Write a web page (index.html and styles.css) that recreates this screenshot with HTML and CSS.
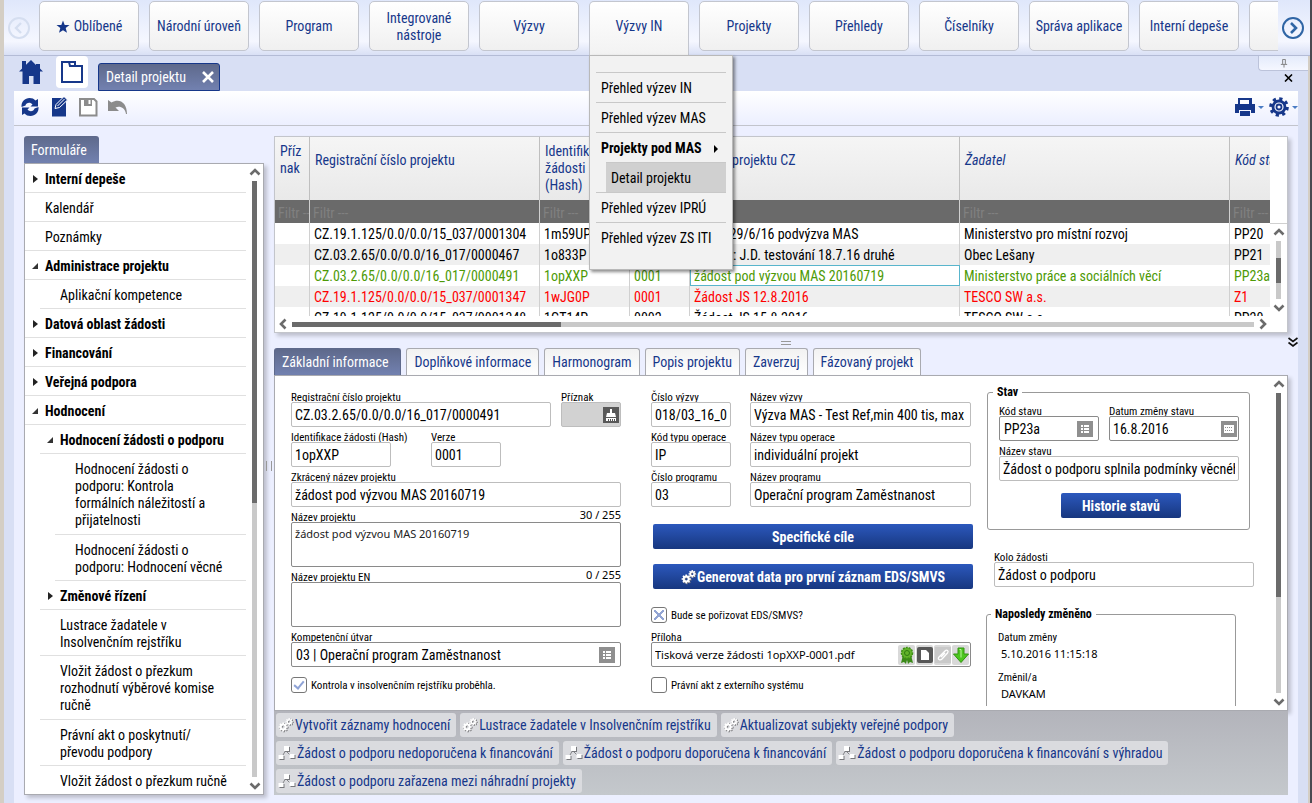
FILE: index.html
```html
<!DOCTYPE html>
<html lang="cs">
<head>
<meta charset="utf-8">
<title>Detail projektu</title>
<link rel="stylesheet" href="styles.css">
</head>
<body>
<svg class="defs" aria-hidden="true">
  <defs>
    <g id="gear-shape">
      <circle cx="0" cy="0" r="3" fill="none" stroke-width="2.4"/>
      <path d="M0-5.6V-3.4M0 3.4V5.6M-5.6 0H-3.4M3.4 0H5.6M-4-4L-2.6-2.6M2.6 2.6L4 4M4-4L2.6-2.6M-2.6 2.6L-4 4" fill="none" stroke-width="2"/>
    </g>
    <symbol id="gears" viewBox="0 0 16 16">
      <g stroke="#77777b" transform="translate(6 10.6) scale(.82)"><use href="#gear-shape"/></g>
      <g stroke="#77777b" transform="translate(12 5.4) scale(.66)"><use href="#gear-shape"/></g>
      <g stroke="#fff" transform="translate(5.2 10) scale(.82)"><use href="#gear-shape"/></g>
      <g stroke="#fff" transform="translate(11.2 4.8) scale(.66)"><use href="#gear-shape"/></g>
    </symbol>
    <symbol id="flow" viewBox="0 0 18 16">
      <path d="M7.500 5.500L4.500 11M8.500 6.500L12.500 10.500" stroke="#85868a" fill="none"/>
      <path d="M7 2h5v5H7zM1.500 11h5v4h-5zM12.500 10h5v4h-5z" fill="#77787c"/>
      <path d="M6 1h5v5H6zM.5 10h5v4h-5zM11.500 9h5v4h-5z" fill="#fff"/>
    </symbol>
    <symbol id="list" viewBox="0 0 16 16">
      <path d="M0 0h16v16H0z" fill="#8f8f8f"/>
      <path d="M4 4h2v2H4zM7 4h5v2H7zM4 7h2v2H4zM7 7h5v2H7zM4 10h2v2H4zM7 10h5v2H7z" fill="#fff"/>
    </symbol>
    <symbol id="chev" viewBox="0 0 12 8"><path d="M1.500 6.500L6 2L10.500 6.500" fill="none" stroke="#6b6b6b" stroke-width="2.600"/></symbol>
  </defs>
</svg>
<div class="app">
  <header class="top">
    <button class="scroll-nav" aria-label="Předchozí"><svg viewBox="0 0 24 24" width="24" height="24" fill="none" stroke="#d5def0" stroke-width="2"><circle cx="12" cy="12" r="10"/><path d="M14 7l-5 5 5 5" stroke-width="2.400"/></svg></button>
    <nav class="menu">
      <a href="#" class="mi"><svg viewBox="0 0 14 14" width="14" height="14"><path d="M7 .5l1.700 4.400 4.800.2-3.800 3 1.300 4.700L7 10.200 3 12.800l1.300-4.700-3.800-3 4.800-.2z" fill="#16378a"/></svg>Oblíbené</a>
      <a href="#" class="mi">Národní úroveň</a>
      <a href="#" class="mi">Program</a>
      <a href="#" class="mi">Integrované nástroje</a>
      <a href="#" class="mi">Výzvy</a>
      <div class="drop">
        <a href="#" class="mi open">Výzvy IN</a>
        <div class="submenu">
          <a href="#">Přehled výzev IN</a>
          <a href="#">Přehled výzev MAS</a>
          <a href="#" class="strong">Projekty pod MAS<i class="arrow"></i></a>
          <a href="#" class="nested">Detail projektu</a>
          <a href="#">Přehled výzev IPRÚ</a>
          <a href="#">Přehled výzev ZS ITI</a>
        </div>
      </div>
      <a href="#" class="mi">Projekty</a>
      <a href="#" class="mi">Přehledy</a>
      <a href="#" class="mi">Číselníky</a>
      <a href="#" class="mi">Správa aplikace</a>
      <a href="#" class="mi">Interní depeše</a>
      <a href="#" class="mi" aria-label="Další"></a>
    </nav>
    <button class="scroll-nav" aria-label="Další"><svg viewBox="0 0 24 24" width="24" height="24" fill="none" stroke="#2f65a5" stroke-width="2"><circle cx="12" cy="12" r="10"/><path d="M10 7l5 5-5 5" stroke-width="2.600"/></svg></button>
  </header>
  <div class="tabbar">
    <button class="plain home" aria-label="Domů"><svg viewBox="0 0 26 26" width="26" height="26"><path d="M13 1L1 12.500h3.500V25h6.500v-8h4.500v8H22V12.500h3l-3-3V5h-4v1z" fill="#16378a"/><path d="M4 2h4v5l-4 4z" fill="#16378a"/></svg></button>
    <button class="plain folder" aria-label="Složky"><svg viewBox="0 0 24 24" width="24" height="24" fill="none" stroke="#16378a" stroke-width="2"><path d="M2 2h7l1 4h12v16H2zM9 2h6v4"/></svg></button>
    <div class="doctab"><span>Detail projektu</span><button class="plain" aria-label="Zavřít záložku"><svg viewBox="0 0 12 12" width="12" height="12"><path d="M1 1l10 10M11 1L1 11" stroke="#fff" stroke-width="2.600"/></svg></button></div>
    <div class="corner">
      <button class="pin plain" aria-label="Připnout"><svg viewBox="0 0 8 10" width="8" height="9" fill="none" stroke="#777"><path d="M2.500 5.500v-5h3v5M.5 6h7M4 6v3.500"/></svg></button>
      <button class="plain shut" aria-label="Zavřít"><svg viewBox="0 0 9 8" width="9" height="8"><path d="M1 .5l7 7M8 .5l-7 7" stroke="#000" stroke-width="1.600"/></svg></button>
    </div>
  </div>
  <div class="page">
    <div class="toolbar">
      <button class="plain" aria-label="Obnovit"><svg viewBox="0 0 20 20" width="20" height="20"><path d="M1.500 10C1 4.500 5 1 9.500 1c2.500 0 4.500.8 6 2.500L18 2v7.500h-7.500l2-2C10 4.500 6 6 5.500 8.500zM18.500 10c.5 5.500-3.500 9-8 9-2.500 0-4.500-.8-6-2.500L2 18v-7.500h7.500l-2 2C10 15.500 14 14 14.500 11.500z" fill="#16378a"/></svg></button>
      <button class="plain" aria-label="Upravit"><svg viewBox="0 0 18 20" width="18" height="20"><path d="M2 1h14v18.500H2z" fill="#16378a"/><path d="M5 11.500l1-4L14-.5l3.500 3.500-8 7.500z" fill="#16378a" stroke="#fff"/><path d="M7.500 9L14.500 2" stroke="#fff"/></svg></button>
      <button class="plain" aria-label="Uložit" disabled><svg viewBox="0 0 20 20" width="20" height="20"><path d="M2 2h14l2.500 2.500V18.500H2z" fill="#fff" stroke="#8c8c8c" stroke-width="2"/><path d="M6 2h8v7H6z" fill="#8c8c8c"/><path d="M10.500 3h2v4h-2z" fill="#fff"/></svg></button>
      <button class="plain" aria-label="Zpět" disabled><svg viewBox="0 0 20 16" width="20" height="16"><path d="M0 1l3.500 2.500C11-1 19 3 19 15h-1C17 9 12 6.500 7.500 8.500L11 12H0z" fill="#8c8c8c"/></svg></button>
      <span class="space"></span>
      <button class="plain tool" aria-label="Tisk"><svg viewBox="0 0 20 20" width="20" height="20"><path d="M3 1h14v6H3z" fill="#16378a"/><path d="M5 3h9v5H5z" fill="#fff"/><path d="M0 7h20v9h-4v-3H4v3H0z" fill="#16378a"/><path d="M5 14h10v5H5z" fill="#16378a"/></svg><i></i></button>
      <button class="plain tool cog" aria-label="Nastavení"><svg viewBox="0 0 20 20" width="20" height="20"><circle cx="10" cy="10" r="8" fill="none" stroke="#16378a" stroke-width="3.600" stroke-dasharray="3.100 3.180"/><circle cx="10" cy="10" r="6" fill="none" stroke="#16378a" stroke-width="2.800"/><circle cx="10" cy="10" r="2.500" fill="none" stroke="#16378a" stroke-width="1.800"/></svg><i></i></button>
    </div>
    <div class="columns">
      <aside class="side">
        <h2 class="side-tab">Formuláře</h2>
        <div class="side-box">
          <ul class="tree">
            <li class="b shut">Interní depeše</li>
            <li>Kalendář</li>
            <li>Poznámky</li>
            <li class="b exp">Administrace projektu</li>
            <li class="l1">Aplikační kompetence</li>
            <li class="b shut">Datová oblast žádosti</li>
            <li class="b shut">Financování</li>
            <li class="b shut">Veřejná podpora</li>
            <li class="b exp">Hodnocení</li>
            <li class="l1 b exp">Hodnocení žádosti o podporu</li>
            <li class="l2 tall">Hodnocení žádosti o podporu: Kontrola formálních náležitostí a přijatelnosti</li>
            <li class="l2">Hodnocení žádosti o podporu: Hodnocení věcné</li>
            <li class="l1 b shut">Změnové řízení</li>
            <li class="l1">Lustrace žadatele v Insolvenčním rejstříku</li>
            <li class="l1 tall">Vložit žádost o přezkum rozhodnutí výběrové komise ručně</li>
            <li class="l1">Právní akt o poskytnutí/<wbr>převodu podpory</li>
            <li class="l1 end">Vložit žádost o přezkum ručně</li>
          </ul>
          <div class="vbar"><svg><use href="#chev"/></svg><div class="track"><div class="thumb t-side"></div></div><svg class="flip"><use href="#chev"/></svg></div>
        </div>
      </aside>
      <div class="vsplit"></div>
      <main class="main">
        <section class="gridbox">
          <div class="gridtop">
            <div class="viewport">
              <table>
                <colgroup><col class="c1"><col class="c2"><col class="c3"><col class="c4"><col class="c5"><col class="c5"><col class="c3"></colgroup>
                <thead>
                  <tr><th><div>Příz<br>nak</div></th><th><div>Registrační číslo projektu</div></th><th><div>Identifikace<br>žádosti<br>(Hash)</div></th><th><div>Verze</div></th><th><div>Název projektu CZ</div></th><th><div><em>Žadatel</em></div></th><th><div><em>Kód stavu</em></div></th></tr>
                  <tr class="filter"><td><input placeholder="Filtr ---" aria-label="Filtr příznak"></td><td><input placeholder="Filtr ---" aria-label="Filtr číslo"></td><td><input placeholder="Filtr ---" aria-label="Filtr hash"></td><td><input placeholder="Filtr ---" aria-label="Filtr verze"></td><td><input placeholder="Filtr ---" aria-label="Filtr název"></td><td><input placeholder="Filtr ---" aria-label="Filtr žadatel"></td><td><input placeholder="Filtr ---" aria-label="Filtr kód"></td></tr>
                </thead>
                <tbody>
                  <tr><td></td><td>CZ.19.1.125/0.0/0.0/15_037/0001304</td><td>1m59UP</td><td>0001</td><td>Výzva 29/6/16 podvýzva MAS</td><td>Ministerstvo pro místní rozvoj</td><td>PP20</td></tr>
                  <tr><td></td><td>CZ.03.2.65/0.0/0.0/16_017/0000467</td><td>1o833P</td><td>0001</td><td>Projekt: J.D. testování 18.7.16 druhé</td><td>Obec Lešany</td><td>PP21</td></tr>
                  <tr class="green"><td></td><td>CZ.03.2.65/0.0/0.0/16_017/0000491</td><td>1opXXP</td><td>0001</td><td class="cur">žádost pod výzvou MAS 20160719</td><td>Ministerstvo práce a sociálních věcí</td><td>PP23a</td></tr>
                  <tr class="red"><td></td><td>CZ.19.1.125/0.0/0.0/15_037/0001347</td><td>1wJG0P</td><td>0001</td><td>Žádost JS 12.8.2016</td><td>TESCO SW a.s.</td><td>Z1</td></tr>
                  <tr><td></td><td>CZ.19.1.125/0.0/0.0/15_037/0001348</td><td>1GT14P</td><td>0002</td><td>Žádost JS 15.8.2016</td><td>TESCO SW a.s.</td><td>PP20</td></tr>
                </tbody>
              </table>
            </div>
            <div class="vbar grid-v"><svg><use href="#chev"/></svg><div class="track"><div class="thumb t-grid"></div></div><svg class="flip"><use href="#chev"/></svg></div>
          </div>
          <div class="hbar"><svg class="left" viewBox="0 0 8 12"><path d="M6.500 1.500L2 6l4.500 4.500" fill="none" stroke="#6b6b6b" stroke-width="2.600"/></svg><div class="track"><div class="thumb"></div></div><svg viewBox="0 0 8 12"><path d="M1.500 1.500L6 6l-4.500 4.500" fill="none" stroke="#6b6b6b" stroke-width="2.600"/></svg></div>
        </section>
        <div class="hsplit"><i></i><button class="plain more" aria-label="Sbalit"><svg viewBox="0 0 10 10" width="10" height="10" fill="none" stroke="#111" stroke-width="1.600"><path d="M.5 1L5 4.500 9.500 1M.5 5.500L5 9l4.500-3.500"/></svg></button></div>
        <div class="tabs">
          <button class="on">Základní informace</button><button>Doplňkové informace</button><button>Harmonogram</button><button>Popis projektu</button><button>Zaverzuj</button><button>Fázovaný projekt</button>
        </div>
        <form class="form" onsubmit="return false">
          <div class="cols">
            <div class="col a">
              <div class="row"><div class="f w260"><label for="a1">Registrační číslo projektu</label><input id="a1" value="CZ.03.2.65/0.0/0.0/16_017/0000491" readonly></div>
                <div class="f w60"><label for="a2">Příznak</label><div class="box gray"><input id="a2" readonly><button class="plain" aria-label="Vyčistit příznak"><svg viewBox="0 0 16 16" width="16" height="16"><path d="M0 0h16v16H0z" fill="#585858"/><path d="M7 2h2v4h3l1 4H3l1-4h3zM3 11h10v3h-1v-2h-1v2h-1v-2H9v2H8v-2H7v2H6v-2H5v2H3z" fill="#fff"/></svg></button></div></div></div>
              <div class="row g40"><div class="f w100"><label for="a3">Identifikace žádosti (Hash)</label><input id="a3" value="1opXXP" readonly></div><div class="f w70"><label for="a4">Verze</label><input id="a4" value="0001" readonly></div></div>
              <div class="f"><label for="a5">Zkrácený název projektu</label><input id="a5" value="žádost pod výzvou MAS 20160719" readonly></div>
              <div class="f"><div class="lab"><label for="a6">Název projektu</label><span>30 / 255</span></div><textarea id="a6">žádost pod výzvou MAS 20160719</textarea></div>
              <div class="f"><div class="lab"><label for="a7">Název projektu EN</label><span>0 / 255</span></div><textarea id="a7"></textarea></div>
              <div class="f"><label for="a8">Kompetenční útvar</label><div class="box dark pr"><input id="a8" value="03 | Operační program Zaměstnanost"><button class="plain" aria-label="Vybrat útvar"><svg width="16" height="16"><use href="#list"/></svg></button></div></div>
              <div class="check"><input type="checkbox" id="k1" checked><label for="k1">Kontrola v insolvenčním rejstříku proběhla.</label></div>
            </div>
            <div class="col b2">
              <div class="row g19"><div class="f w80"><label for="b1">Číslo výzvy</label><input id="b1" value="018/03_16_037" readonly></div><div class="f grow"><label for="b2">Název výzvy</label><input id="b2" value="Výzva MAS - Test Ref,min 400 tis, max 2 mil" readonly></div></div>
              <div class="row g19"><div class="f w80"><label for="b3">Kód typu operace</label><input id="b3" value="IP" readonly></div><div class="f grow"><label for="b4">Název typu operace</label><input id="b4" value="individuální projekt" readonly></div></div>
              <div class="row g19"><div class="f w80"><label for="b5">Číslo programu</label><input id="b5" value="03" readonly></div><div class="f grow"><label for="b6">Název programu</label><input id="b6" value="Operační program Zaměstnanost" readonly></div></div>
              <button class="blue">Specifické cíle</button>
              <button class="blue second"><svg width="16" height="16"><use href="#gears"/></svg>Generovat data pro první záznam EDS/SMVS</button>
              <div class="check eds"><input type="checkbox" class="cross" id="k2" checked><label for="k2">Bude se pořizovat EDS/SMVS?</label></div>
              <div class="f"><label for="b7">Příloha</label><div class="box dark att"><input id="b7" value="Tisková verze žádosti 1opXXP-0001.pdf">
                <button class="plain ic" aria-label="Podpis"><svg viewBox="0 0 16 18" width="16" height="18"><path d="M4 9l-2 8 3-1 2 2 1-4 1 4 2-2 3 1-2-8z" fill="#3b8a18"/><circle cx="8" cy="7" r="5.500" fill="#62b32a" stroke="#3d8f17" stroke-width="1.500" stroke-dasharray="2 1"/><circle cx="8" cy="7" r="2.500" fill="none" stroke="#2f7a12"/></svg></button>
                <button class="plain ic" aria-label="Soubor"><svg viewBox="0 0 16 16" width="16" height="16"><rect width="16" height="16" rx="2" fill="#575757"/><path d="M4 3h5l3 3v7H4z" fill="#fff"/></svg></button>
                <button class="plain ic" aria-label="Připojit"><svg viewBox="0 0 16 16" width="16" height="16"><rect width="16" height="16" fill="#c9c9c9"/><path d="M4 10l6-6c2-2 4 0 2.500 2L7 12c-2 2-5 0-3-2zM6 10l4-4" fill="none" stroke="#fff" stroke-width="1.300"/></svg></button>
                <button class="plain ic" aria-label="Stáhnout"><svg viewBox="0 0 16 16" width="16" height="16"><path d="M5 1h6v6h4.500L8 15.500.5 7H5z" fill="#4cc61f" stroke="#329412"/><path d="M6.500 2.500h1.500v8" fill="none" stroke="#b9f29e"/></svg></button></div></div>
              <div class="check"><input type="checkbox" id="k3"><label for="k3">Právní akt z externího systému</label></div>
            </div>
            <div class="col c">
              <fieldset class="stav"><legend>Stav</legend>
                <div class="row"><div class="f w100"><label for="c1">Kód stavu</label><div class="box dark pr"><input id="c1" value="PP23a"><button class="plain" aria-label="Vybrat stav"><svg width="16" height="16"><use href="#list"/></svg></button></div></div>
                <div class="f grow"><label for="c2">Datum změny stavu</label><div class="box dark day"><input id="c2" value="16.8.2016"><button class="plain" aria-label="Kalendář"><svg viewBox="0 0 16 16" width="16" height="16"><path d="M0 0h16v16H0z" fill="#8f8f8f"/><path d="M3 4h10v8H3z" fill="#fff"/><path d="M4 6h1v1H4zM6 6h1v1H6zM8 6h1v1H8zM10 6h1v1h-1zM4 9h1v1H4zM6 9h1v1H6zM8 9h1v1H8zM10 9h1v1h-1z" fill="#8f8f8f"/></svg></button></div></div></div>
                <div class="f"><label for="c3">Název stavu</label><input id="c3" value="Žádost o podporu splnila podmínky věcného hodnocení" readonly></div>
                <button class="blue hist">Historie stavů</button>
              </fieldset>
              <div class="f kolo"><label for="c4">Kolo žádosti</label><input id="c4" value="Žádost o podporu" readonly></div>
              <fieldset class="last"><legend>Naposledy změněno</legend>
                <dl><dt>Datum změny</dt><dd>5.10.2016 11:15:18</dd><dt>Změnil/a</dt><dd>DAVKAM</dd></dl>
              </fieldset>
            </div>
          </div>
          <div class="vbar form-v"><svg><use href="#chev"/></svg><div class="track"><div class="thumb t-form"></div></div><svg class="flip"><use href="#chev"/></svg></div>
        </form>
        <footer class="actions">
          <div class="line"><button><svg width="16" height="16"><use href="#gears"/></svg>Vytvořit záznamy hodnocení</button><button><svg width="16" height="16"><use href="#gears"/></svg>Lustrace žadatele v Insolvenčním rejstříku</button><button><svg width="16" height="16"><use href="#gears"/></svg>Aktualizovat subjekty veřejné podpory</button></div>
          <div class="line"><button><svg width="18" height="16"><use href="#flow"/></svg>Žádost o podporu nedoporučena k financování</button><button><svg width="18" height="16"><use href="#flow"/></svg>Žádost o podporu doporučena k financování</button><button><svg width="18" height="16"><use href="#flow"/></svg>Žádost o podporu doporučena k financování s výhradou</button></div>
          <div class="line"><button><svg width="18" height="16"><use href="#flow"/></svg>Žádost o podporu zařazena mezi náhradní projekty</button></div>
        </footer>
      </main>
    </div>
  </div>
</div>
</body>
</html>
```
FILE: styles.css
```css
* { box-sizing: border-box; }
html, body { height: 100%; margin: 0; }
body, button, input, textarea { font-family: "Roboto Condensed", Roboto, sans-serif; font-size: 14px; }
button { cursor: pointer; }
a { text-decoration: none; }
.defs { position: absolute; width: 0; height: 0; }
.plain { background: none; border: 0; padding: 0; display: flex; align-items: center; }

.app { height: 100vh; min-height: 600px; display: flex; flex-direction: column; background: #d8dff4; border-left: 4px solid #d4cec4; border-right: 2px solid #4a4a50; box-shadow: inset -2px 0 #d4cec4; overflow: hidden; }

.top { display: flex; align-items: stretch; height: 56px; flex: none; padding-right: 2px; background: linear-gradient(#dfe7fb, #f5f7ff 75%, #d9e0f5); border-bottom: 1px solid #b4bcd6; }
.scroll-nav { border: 0; background: none; padding: 0; width: 30px; flex: none; display: flex; align-items: center; justify-content: center; }
.menu { flex: 1; min-width: 0; display: flex; gap: 10px; padding: 1px 0 4px 5px; overflow-x: clip; overflow-y: visible; }
.mi { width: 100px; flex: none; height: 50px; padding-top: 1px; display: flex; gap: 4px; align-items: center; justify-content: center; text-align: center; line-height: 17px; color: #16378a; border: 1px solid #c3c6cf; border-radius: 5px; background: linear-gradient(#fff, #f0f0f0); }
.drop { position: relative; flex: none; z-index: 5; }
.mi.open { height: 55px; padding-bottom: 6px; border-bottom: 0; border-radius: 5px 5px 0 0; background: linear-gradient(#fff, #f2f2f2); }
.submenu { position: absolute; left: 0; top: 54px; width: 144px; height: 215px; padding: 16px 6px 0; background: #f2f2f2; border: 1px solid #b9b9b9; box-shadow: 2px 2px 3px rgba(0,0,0,.45); }
.submenu a { display: block; height: 30px; line-height: 29px; padding: 1px 0 0 5px; border-top: 1px solid #c8c8c8; color: #000; white-space: nowrap; }
.submenu .strong { font-weight: bold; }
.arrow { display: inline-block; margin-left: 12px; border: 4px solid transparent; border-left-color: #000; border-right: 0; }
.submenu .nested { margin-left: 10px; background: #d0d0d0; }

.tabbar { height: 35px; flex: none; display: flex; align-items: flex-end; padding-left: 14px; }
.home { height: 32px; width: 26px; margin-bottom: 3px; }
.folder { width: 32px; height: 32px; margin: 0 10px 3px 12px; justify-content: center; background: #fff; border-radius: 4px; }
.doctab { display: flex; align-items: center; gap: 16px; height: 28px; padding: 0 5px 0 7px; color: #fff; background: linear-gradient(#5e698b, #7281b0); border: 1px solid #16378a; border-radius: 3px 3px 0 0; }
.corner { align-self: stretch; margin-left: auto; display: flex; flex-direction: column; align-items: flex-end; gap: 3px; margin-right: 2px; }
.pin { width: 50px; height: 15px; justify-content: center; background: linear-gradient(#e4ebfb, #f5f7ff); border: 1px solid #bcc3da; border-width: 0 0 1px 1px; border-radius: 0 0 0 4px; }
.shut.plain { margin-right: 15px; }

.page { flex: 1; min-height: 0; margin: 0 12px 0 10px; background: #ecefff; display: flex; flex-direction: column; }
.toolbar { flex: none; height: 35px; display: flex; align-items: center; gap: 10px; padding: 0 0 2px 6px; background: linear-gradient(#fff, #ecefff); border-bottom: 1px solid #c2c4cc; }
.space { flex: 1; }
.tool { gap: 3px; }
.cog { margin-left: -5px; }
.tool i { border: 3px solid transparent; border-top-color: #4a7cc4; border-bottom: 0; }

.columns { flex: 1; min-height: 0; display: flex; padding: 10px 10px 8px; }
.side { width: 240px; flex: none; display: flex; flex-direction: column; }
.side-tab { margin: 0; align-self: flex-start; height: 27px; line-height: 29px; padding: 0 12px 0 7px; font-size: 14px; font-weight: normal; color: #fff; background: linear-gradient(#5e698b, #7281b0); border-radius: 3px 3px 0 0; }
.side-box { flex: 1; min-height: 0; display: flex; background: #fff; border: 1px solid #a9aab0; box-shadow: 3px 3px 4px rgba(0,0,0,.2); }
.tree { list-style: none; margin: 0; padding: 0; flex: 1; overflow: hidden; }
.tree li { position: relative; padding: 7px 14px 4px 20px; line-height: 17px; border-bottom: 1px solid #e0e0e0; }
.tree .l1 { margin-left: 15px; }
.tree .l2 { margin-left: 30px; padding-right: 20px; }
.tree .b { font-weight: bold; padding-right: 0; white-space: nowrap; }
.tree .tall { padding-bottom: 5px; }
.tree .end { border-bottom: 0; }
.tree .b::before { content: ""; position: absolute; left: 8px; top: 11px; border: 4px solid transparent; }
.tree .shut::before { border-left: 5px solid #222; border-right: 0; }
.tree .exp::before { left: 7px; top: 12px; border: 3px solid #333; border-top-color: transparent; border-left-color: transparent; }

.vbar { width: 17px; flex: none; display: flex; flex-direction: column; align-items: center; padding: 4px 0; }
.vbar svg { width: 12px; height: 8px; flex: none; }
.flip { transform: rotate(180deg); }
.vbar .track { flex: 1; width: 5px; margin: 5px 0; background: #c9c9c9; }
.thumb { background: #6b6b6b; }
.t-side { height: 54%; }
.t-form { height: 68%; }
.t-grid { height: 25px; margin-top: 17px; }
.vsplit { width: 10px; flex: none; display: flex; align-items: center; justify-content: center; }
.vsplit::before { content: ""; width: 4px; height: 10px; border: 1px solid #999; border-width: 0 1px; }

.main { flex: 1; min-width: 0; display: flex; flex-direction: column; }
.gridbox { background: #fff; border: 1px solid #c3c5cb; box-shadow: 3px 3px 4px rgba(0,0,0,.2); }
.gridtop { display: flex; height: 179px; }
.viewport { flex: 1; min-width: 0; overflow: hidden; }
.grid-v { margin-top: 86px; border-top: 1px solid #d0d0d0; }
table { width: 1045px; table-layout: fixed; border-collapse: separate; border-spacing: 0; }
.c1 { width: 35px; } .c2 { width: 230px; } .c3 { width: 90px; } .c4 { width: 60px; } .c5 { width: 270px; }
th { height: 63px; padding: 6px 5px 0; vertical-align: top; text-align: left; font-weight: normal; line-height: 17px; color: #16378a; background: linear-gradient(#f5f5f5, #e9e9e9); border-right: 1px solid #bfbfbf; white-space: nowrap; overflow: hidden; }
th div { display: flex; min-height: 34px; align-items: center; }
td { height: 21px; padding: 1px 0 0 4px; line-height: 17px; border-right: 1px solid #d0d0d0; white-space: nowrap; overflow: hidden; }
.filter td { height: 23px; padding: 0; background: #6a6a6a; }
.filter input { display: block; width: 100%; height: 23px; border: 0; padding: 2px 0 0 3px; background: none; }
.filter input::placeholder { color: #808080; opacity: 1; }
tbody tr:nth-child(even) { background: #efefef; }
.green { color: #4e9a06; }
.red { color: #f00; }
.cur { outline: 1px solid #59b5cc; outline-offset: -1px; }
.hbar { display: flex; align-items: center; height: 16px; padding: 0 20px 0 4px; gap: 5px; }
.hbar svg { width: 8px; height: 12px; }
.hbar .track { flex: 1; height: 5px; background: #c9c9c9; }
.hbar .thumb { height: 5px; width: 28%; }

.hsplit { height: 15px; flex: none; position: relative; display: flex; align-items: center; justify-content: center; padding: 5px 0 0 10px; }
.hsplit i { width: 10px; height: 4px; border: 1px solid #999; border-width: 1px 0; }
.more { position: absolute; right: -10px; top: 4px; }

.tabs { flex: none; display: flex; gap: 5px; height: 27px; }
.tabs button { padding: 0 7px; color: #16378a; background: linear-gradient(#f2f2f2, #fff); border: 1px solid #a9aab0; border-bottom: 0; border-radius: 3px 3px 0 0; white-space: nowrap; }
.tabs .on { color: #fff; background: linear-gradient(#5e698b, #7281b0); border-color: #5e698b; padding-right: 12px; }

.form { flex: 1; min-height: 0; display: flex; background: #fff; border: 1px solid #a9aab0; box-shadow: 3px 3px 4px rgba(0,0,0,.2); }
.cols { flex: 1; min-width: 0; display: flex; overflow: hidden; padding: 14px 0 0 16px; margin-bottom: 4px; }
.a { width: 330px; margin-right: 30px; }
.b2 { width: 320px; margin-right: 15px; }
.col { flex: none; display: flex; flex-direction: column; gap: 3px; }
.row { display: flex; gap: 10px; }
.g40 { gap: 40px; } .g19 { gap: 19px; }
.f { display: flex; flex-direction: column; min-width: 0; }
.grow { flex: 1; }
.w260 { width: 260px; } .w100 { width: 100px; } .w80 { width: 80px; } .w70 { width: 70px; } .w60 { width: 60px; }
.f label { height: 12px; font-size: 11px; line-height: 15px; white-space: nowrap; }
.lab { display: flex; justify-content: space-between; line-height: 12px; }
.lab span { font: 11px/10px "Noto Sans", sans-serif; }
.f > input, .box { width: 100%; height: 25px; border: 1px solid #bdbdbd; border-radius: 2px; background: #fff; padding: 1px 3px; color: #000; }
.f > textarea { height: 45px; resize: none; border: 1px solid #8a8a8a; border-radius: 2px; padding: 4px 3px; font: 11px/14px "Noto Sans", sans-serif; color: #222; overflow: hidden; }
.box { display: flex; align-items: center; }
.box input { flex: 1; min-width: 0; width: 0; border: 0; background: none; padding: 0; }
.box.dark { border-color: #8a8a8a; }
.box.pr { padding-left: 4px; padding-right: 5px; }
.box.day { padding-right: 1px; }
.box.gray { background: #d2d2d2; padding-right: 1px; }
.box.att { padding-right: 1px; gap: 1px; }
.att input { font: 11px "Noto Sans", sans-serif; }
.ic { width: 17px; height: 20px; justify-content: center; background: #d9d9d9; border-radius: 2px; flex: none; }
.check { display: flex; align-items: center; gap: 4px; height: 16px; margin-top: 7px; }
.check label { font-size: 11px; }
.check input { appearance: none; width: 16px; height: 16px; margin: 0; border: 1px solid #777; border-radius: 3px; background: #fff; display: flex; align-items: center; justify-content: center; }
.check input:checked::after { content: ""; width: 4px; height: 8px; margin-bottom: 3px; border: solid #8fa3d6; border-width: 0 2px 2px 0; transform: rotate(40deg); }
.check input.cross:checked::after { width: 10px; height: 10px; margin: 0; border: 0; transform: none; background: linear-gradient(45deg, transparent 41%, #93a5d4 41% 59%, transparent 59%), linear-gradient(-45deg, transparent 41%, #93a5d4 41% 59%, transparent 59%); }
.blue { display: flex; align-items: center; justify-content: center; height: 25px; padding-top: 2px; margin: 14px -2px 0 2px; border: 0; border-radius: 2px; color: #fff; font-weight: bold; background: linear-gradient(#2c58bd, #17377f); }
.blue.second { margin-top: 12px; }
.eds { margin: 15px 0 4px; }
fieldset { min-width: 0; margin: 0; border: 1px solid #999; border-radius: 3px; }
legend { font-size: 12px; line-height: 14px; font-weight: bold; padding: 0 4px; }
.stav { width: 263px; margin: -5px 0 0 1px; padding: 5px 10px 11px 11px; }
.stav .f { margin-bottom: 3px; }
.blue.hist { width: 120px; margin: 12px 0 0 62px; }
.kolo { width: 260px; margin: 17px 0 0 8px; }
.last { width: 250px; height: 140px; margin-top: 17px; padding: 10px 10px 0; }
.stav legend, .last legend { margin-left: -6px; }
dl { margin: 0; }
dt { font-size: 11px; line-height: 14px; padding-left: 1px; }
dd { margin: 0 0 8px 4px; font: 11px/18px "Noto Sans", sans-serif; }

.actions { flex: none; display: flex; flex-direction: column; gap: 4px; padding: 2px; background: linear-gradient(#b3b4bb, #c4c8cc); }
.line { display: flex; gap: 4px; }
.actions button { display: flex; align-items: center; gap: 1px; height: 24px; padding: 0 6px 0 2px; color: #16378a; background: #dadbdf; border: 0; border-radius: 3px; white-space: nowrap; }
```
